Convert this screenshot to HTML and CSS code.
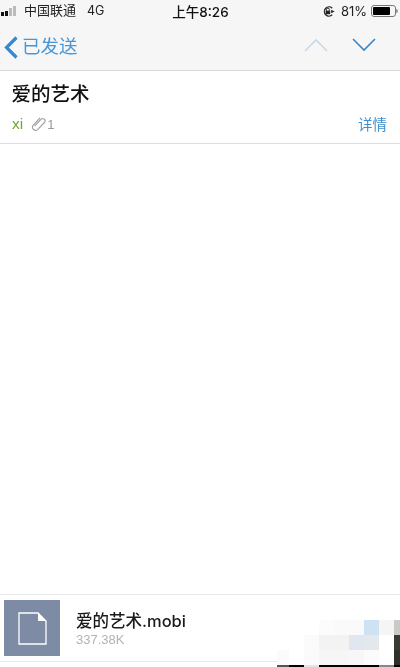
FILE: index.html
```html
<!DOCTYPE html>
<html lang="zh">
<head>
<meta charset="utf-8">
<title>爱的艺术</title>
<link rel="stylesheet" href="styles.css">
</head>
<body>
<div class="screen">
  <header class="topbar">
    <div class="status">
      <div class="status-left">
        <span class="signal"><i class="on"></i><i class="on"></i><i></i><i></i></span>
        <span class="carrier">中国联通</span>
        <span class="net">4G</span>
      </div>
      <div class="clock">上午8:26</div>
      <div class="status-right">
        <svg class="lock" width="13" height="13" viewBox="0 0 13 13"><path d="M10.2 3.2A4.6 4.6 0 1 0 10.2 9.8" fill="none" stroke="#222" stroke-width="1.3"/><path d="M9.2 4.8 12.6 6.5 9.2 8.2Z" fill="#222"/><rect x="3.6" y="5.6" width="4.6" height="3.6" fill="#222"/><path d="M4.5 5.6V4.4a1.4 1.4 0 0 1 2.8 0V5.6" fill="none" stroke="#222" stroke-width="1"/></svg>
        <span class="pct">81%</span>
        <span class="battery"><span class="level"></span></span><span class="nub"></span>
      </div>
    </div>
    <nav class="nav">
      <div class="back">
        <svg width="16" height="24" viewBox="0 0 16 24"><path d="M13.5 2.5 3.5 12.5 13.5 22.5" fill="none" stroke="#3489d3" stroke-width="3.2"/></svg>
        <span>已发送</span>
      </div>
      <div class="arrows">
        <svg width="24" height="14" viewBox="0 0 24 14"><path d="M1 13 12 2 23 13" fill="none" stroke="#c6d9ea" stroke-width="1.6"/></svg>
        <svg width="24" height="14" viewBox="0 0 24 14"><path d="M1 1 12 12 23 1" fill="none" stroke="#3a87c8" stroke-width="1.6"/></svg>
      </div>
    </nav>
  </header>
  <section class="subject">
    <h1>爱的艺术</h1>
    <div class="meta">
      <div class="from">
        <span class="sender">xi</span>
        <svg class="clip" width="18" height="16" viewBox="0 0 18 16"><path d="M4.6 10.2 11 3.4a2.3 2.3 0 0 1 3.4 3.1L7.6 13.6a3.1 3.1 0 0 1-4.5-4.2L10 2" fill="none" stroke="#a0a0a0" stroke-width="1.1"/></svg>
        <span class="count">1</span>
      </div>
      <span class="details">详情</span>
    </div>
  </section>
  <main class="body"></main>
  <section class="attachment">
    <div class="thumb">
      <svg width="29" height="33" viewBox="0 0 29 33"><path d="M1 1H20L28 9V32H1Z" fill="none" stroke="#fff" stroke-width="1.3"/><path d="M20 1V9H28Z" fill="#fff"/></svg>
    </div>
    <div class="file">
      <div class="file-name">爱的艺术.mobi</div>
      <div class="file-size">337.38K</div>
    </div>
  </section>
  <div class="bottom-gap"></div>
  <div class="mosaic" aria-hidden="true">
    <i class="c1"></i><i class="c2"></i><i class="c3"></i><i class="c4"></i><i class="c5"></i>
    <i class="c6"></i><i class="c7"></i><i class="c8"></i><i class="c9"></i><i class="c10"></i><i class="c11"></i>
    <i class="c12"></i><i class="c13"></i><i class="c14"></i><i class="c15"></i><i class="c16"></i><i class="c17"></i><i class="c18"></i><i class="c19"></i><i class="c20"></i>
    <i class="c21"></i><i class="c22"></i><i class="c23"></i><i class="c24"></i><i class="c25"></i>
  </div>
</div>
</body>
</html>
```

FILE: styles.css
```css
* { box-sizing: border-box; }
html, body { margin: 0; padding: 0; background: #fff; }
body {
  font-family: "Liberation Sans", "Noto Sans CJK SC", sans-serif;
  color: #111;
}
.screen {
  position: relative;
  width: 400px;
  height: 667px;
  display: flex;
  flex-direction: column;
  overflow: hidden;
}
.topbar {
  height: 71px;
  background: #f6f6f6;
  border-bottom: 1px solid #d8d8d8;
  flex: none;
}
.status {
  height: 22px;
  display: grid;
  grid-template-columns: 1fr auto 1fr;
  align-items: center;
  color: #222;
  filter: blur(.3px);
}
.status-left { display: flex; align-items: center; padding-left: 1px; }
.signal { display: flex; align-items: flex-end; gap: 1px; width: 23px; height: 10px; }
.signal i { width: 3px; background: #bbb; display: block; }
.signal i:nth-child(1) { height: 4px; }
.signal i:nth-child(2) { height: 5px; }
.signal i:nth-child(3) { height: 8px; }
.signal i:nth-child(4) { height: 10px; }
.signal i.on { background: #111; }
.carrier { font-size: 13px; line-height: 22px; }
.net { margin-left: 11px; font-family: Inter, sans-serif; font-size: 12.5px; line-height: 22px; }
.clock { font-family: Inter, "Noto Sans CJK SC", sans-serif; font-size: 13.5px; font-weight: 500; color: #111; padding-left: 1px; }
.status-right { display: flex; align-items: center; justify-content: flex-end; padding-right: 2px; }
.lock { margin-right: 6px; }
.pct { font-family: Inter, sans-serif; font-size: 13px; margin-right: 4px; }
.battery {
  width: 25px;
  height: 12px;
  border: 1px solid #777;
  border-radius: 3px;
  padding: 1px;
  display: block;
}
.level { display: block; width: 81%; height: 100%; background: #000; border-radius: 1px; }
.nub { width: 2px; height: 4px; background: #999; border-radius: 0 2px 2px 0; }
.nav {
  height: 48px;
  display: flex;
  align-items: center;
  justify-content: space-between;
  padding: 0 24px 2px 3px;
}
.back {
  display: flex;
  align-items: center;
  gap: 3px;
  color: #4a97d8;
  font-size: 18.5px;
  line-height: 24px;
  padding-top: 3px;
  filter: blur(.3px);
}
.arrows { display: flex; gap: 24px; }
.subject {
  height: 73px;
  flex: none;
  border-bottom: 1px solid #dedede;
  padding: 9px 12px 0;
}
.subject h1 {
  margin: 0 0 0 -.5px;
  font-size: 19.5px;
  line-height: 28px;
  font-weight: 500;
  color: #111;
  filter: blur(.3px);
}
.meta {
  margin-top: 5px;
  display: flex;
  justify-content: space-between;
  align-items: center;
  height: 22px;
  filter: blur(.3px);
}
.from { display: flex; align-items: center; }
.sender { color: #6fa832; font-size: 15.5px; margin-right: 7px; }
.clip { margin-right: 0; }
.count { color: #999; font-size: 13px; margin-left: -1px; }
.details { color: #3f8fd0; font-size: 14.5px; margin-right: 1px; margin-top: -2px; }
.body { flex: 1; background: #fff; }
.attachment {
  height: 68px;
  flex: none;
  display: flex;
  align-items: center;
  gap: 16px;
  padding-left: 4px;
  border-top: 1px solid #e8e8e8;
  border-bottom: 1px solid #e8e8e8;
}
.thumb {
  width: 56px;
  height: 56px;
  background: #7e8ba5;
  display: flex;
  align-items: center;
  justify-content: center;
}
.file { filter: blur(.3px); padding-top: 2px; }
.file-name { font-family: Inter, "Noto Sans CJK SC", sans-serif; font-size: 16.5px; line-height: 22px; font-weight: 500; color: #1a1a1a; }
.file-size { font-size: 13px; line-height: 16px; color: #b3b3b3; }
.bottom-gap { height: 5px; flex: none; }

/* Pixelated watermark over the lower right corner */
.mosaic {
  position: absolute;
  left: 277px;
  top: 620px;
  width: 123px;
  height: 47px;
  display: grid;
  grid-template-columns: 12px repeat(7, 15px) 6px;
  grid-template-rows: 15px 15px 15px 2px;
}
.mosaic i { display: block; }
.c1 { grid-area: 1 / 4 / 2 / 5; background: #fcfcfc; }
.c2 { grid-area: 1 / 5 / 2 / 7; background: #fafafa; }
.c3 { grid-area: 1 / 7 / 2 / 8; background: #cfe2f3; }
.c4 { grid-area: 1 / 8 / 2 / 9; background: #f5f5f5; }
.c5 { grid-area: 1 / 9 / 2 / 10; background: #c9c9c7; }
.c6 { grid-area: 2 / 3 / 3 / 4; background: #fbfbfb; }
.c7 { grid-area: 2 / 4 / 3 / 6; background: #f3f3f3; }
.c8 { grid-area: 2 / 6 / 3 / 7; background: #e0e7f0; }
.c9 { grid-area: 2 / 7 / 3 / 8; background: #e2e8ec; }
.c10 { grid-area: 2 / 8 / 3 / 9; background: #fff; }
.c11 { grid-area: 2 / 9 / 3 / 10; background: #3a3a30; }
.c12 { grid-area: 3 / 1 / 4 / 2; background: #fbfbfb; }
.c13 { grid-area: 3 / 2 / 4 / 3; background: #fff; }
.c14 { grid-area: 3 / 3 / 4 / 4; background: #fafafa; }
.c15 { grid-area: 3 / 4 / 4 / 6; background: #f6f6f6; }
.c16 { grid-area: 3 / 6 / 4 / 7; background: #f7f7f7; }
.c17 { grid-area: 3 / 7 / 4 / 8; background: #fbfbfb; }
.c18 { grid-area: 3 / 8 / 4 / 9; background: #fff; }
.c19 { grid-area: 3 / 9 / 4 / 10; background: #2f2f2b; }
.c20 { grid-area: 4 / 1 / 5 / 2; background: #555; }
.c21 { grid-area: 4 / 2 / 5 / 3; background: #000; }
.c22 { grid-area: 4 / 3 / 5 / 4; background: #e5e5e5; }
.c23 { grid-area: 4 / 4 / 5 / 8; background: #000; }
.c24 { grid-area: 4 / 8 / 5 / 9; background: #888; }
.c25 { grid-area: 4 / 9 / 5 / 10; background: #000; }
```
